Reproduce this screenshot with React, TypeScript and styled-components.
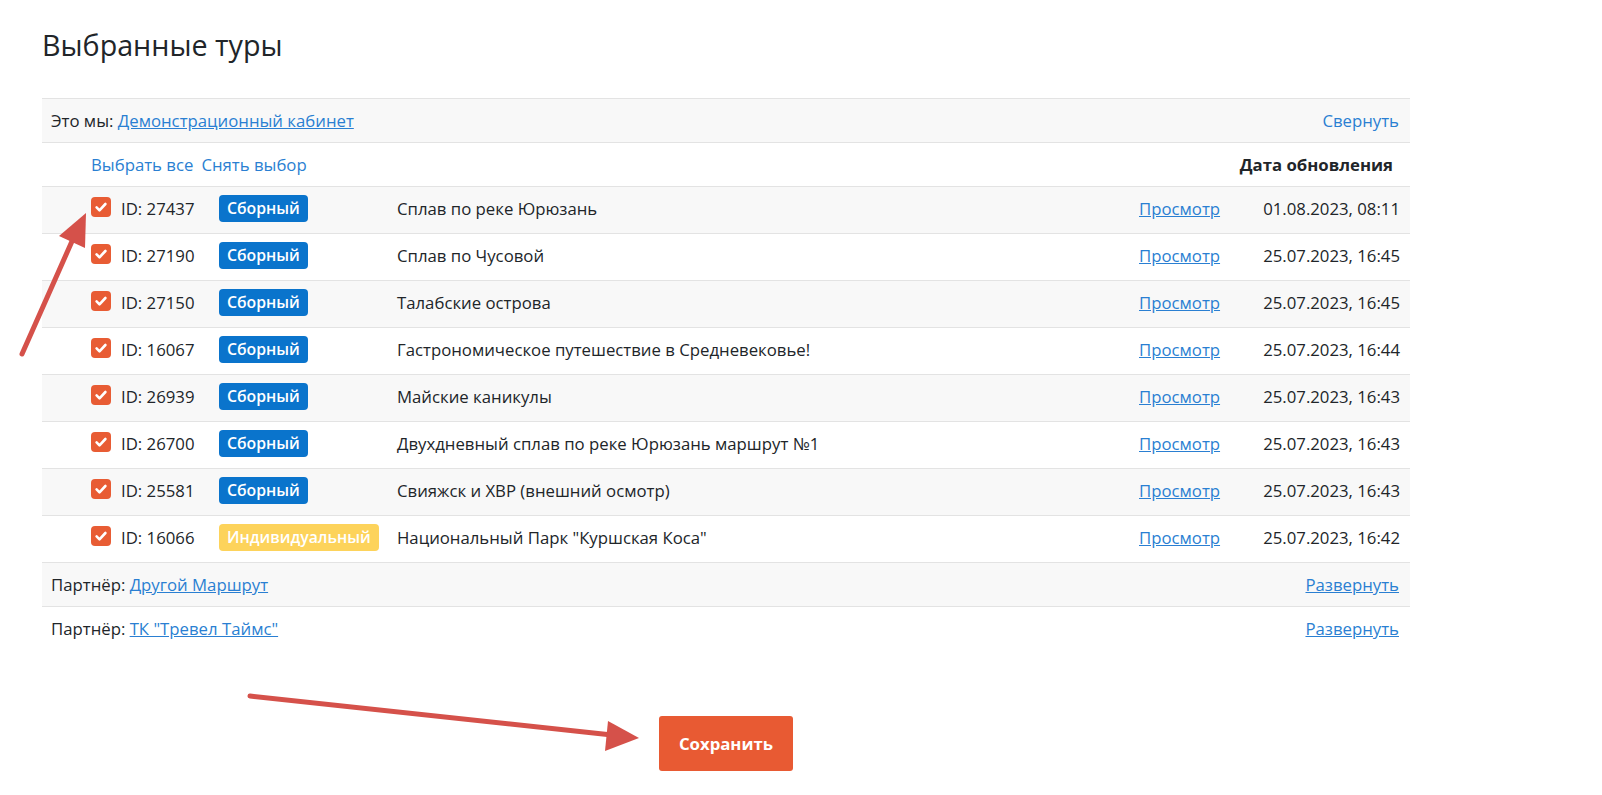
import React from "react";
import { styled, createGlobalStyle } from "styled-components";

type TourKind = "group" | "individual";

interface Tour {
    id: number;
    kind: TourKind;
    title: string;
    updated: string;
}

const tours: Tour[] = [
    { id: 27437, kind: "group", title: "Сплав по реке Юрюзань", updated: "01.08.2023, 08:11" },
    { id: 27190, kind: "group", title: "Сплав по Чусовой", updated: "25.07.2023, 16:45" },
    { id: 27150, kind: "group", title: "Талабские острова", updated: "25.07.2023, 16:45" },
    { id: 16067, kind: "group", title: "Гастрономическое путешествие в Средневековье!", updated: "25.07.2023, 16:44" },
    { id: 26939, kind: "group", title: "Майские каникулы", updated: "25.07.2023, 16:43" },
    { id: 26700, kind: "group", title: "Двухдневный сплав по реке Юрюзань маршрут №1", updated: "25.07.2023, 16:43" },
    { id: 25581, kind: "group", title: "Свияжск и ХВР (внешний осмотр)", updated: "25.07.2023, 16:43" },
    { id: 16066, kind: "individual", title: "Национальный Парк \"Куршская Коса\"", updated: "25.07.2023, 16:42" },
];

const partners = ["Другой Маршрут", "ТК \"Тревел Таймс\""];

const GlobalStyle = createGlobalStyle`
    body {
        margin: 0;
        background: #fff;
        font-family: "Open Sans", "Noto Sans", sans-serif;
        color: #212529;
    }
`;

function CheckIcon() {
    return (
        <svg width="20" height="20" viewBox="0 0 20 20">
            <path d="M5.6 10.4l2.9 2.9 5.9-6.3" stroke="#fff" strokeWidth="2.6" fill="none"
                  strokeLinecap="round" strokeLinejoin="round"/>
        </svg>
    );
}

function Annotations() {
    return (
        <Overlay width="1602" height="795" viewBox="0 0 1602 795">
            <g stroke="#d5514a" strokeWidth="5" strokeLinecap="round" fill="none">
                <line x1="22" y1="354" x2="73" y2="239"/>
                <line x1="250" y1="696" x2="612" y2="735"/>
            </g>
            <g fill="#d5514a">
                <polygon points="86,213 59,236 85,248"/>
                <polygon points="639,738 608,721 605,751"/>
            </g>
        </Overlay>
    );
}

function App() {
    return (
        <>
            <GlobalStyle/>
            <Page>
                <Heading>Выбранные туры</Heading>
                <Table>
                    <GroupRow $striped>
                        <span>Это мы: <UnderLink href="#">Демонстрационный кабинет</UnderLink></span>
                        <PlainLink href="#">Свернуть</PlainLink>
                    </GroupRow>
                    <HeadRow>
                        <SelectLinks>
                            <PlainLink href="#">Выбрать все</PlainLink>
                            <PlainLink href="#">Снять выбор</PlainLink>
                        </SelectLinks>
                        <HeadLabel>Дата обновления</HeadLabel>
                    </HeadRow>
                    {tours.map((tour, i) => (
                        <TourRow key={tour.id} $striped={i % 2 === 0}>
                            <span/>
                            <Checkbox><CheckIcon/></Checkbox>
                            <span>ID: {tour.id}</span>
                            <span>
                                <Badge $kind={tour.kind}>
                                    {tour.kind === "group" ? "Сборный" : "Индивидуальный"}
                                </Badge>
                            </span>
                            <span>{tour.title}</span>
                            <UnderLink href="#">Просмотр</UnderLink>
                            <DateCell>{tour.updated}</DateCell>
                        </TourRow>
                    ))}
                    {partners.map((name, i) => (
                        <GroupRow key={name} $striped={i % 2 === 0}>
                            <span>Партнёр: <UnderLink href="#">{name}</UnderLink></span>
                            <UnderLink href="#">Развернуть</UnderLink>
                        </GroupRow>
                    ))}
                </Table>
                <Actions>
                    <SaveButton>Сохранить</SaveButton>
                </Actions>
            </Page>
            <Annotations/>
        </>
    );
}

const Page = styled.div`
    width: 1368px;
    padding: 28px 0 0 42px;
`;

const Heading = styled.h1`
    margin: 0 0 36px 0;
    font-size: 28.7px;
    font-weight: 400;
    line-height: 1.2;
    color: #212529;
`;

const Table = styled.div`
    font-size: 16.75px;
`;

const rowBase = `
    border-top: 1px solid #e3e3e3;
    box-sizing: border-box;
`;

const GroupRow = styled.div<{ $striped?: boolean }>`
    ${rowBase};
    height: 44px;
    display: flex;
    align-items: center;
    justify-content: space-between;
    padding: 0 11px 0 9px;
    background: ${({ $striped }) => ($striped ? "#f8f8f8" : "#fff")};
`;

const HeadRow = styled.div`
    ${rowBase};
    height: 44px;
    display: flex;
    align-items: center;
    justify-content: space-between;
    padding: 0 17px 0 49px;
`;

const SelectLinks = styled.div`
    display: flex;
    gap: 8px;
`;

const HeadLabel = styled.span`
    font-weight: 700;
`;

const TourRow = styled.div<{ $striped?: boolean }>`
    ${rowBase};
    height: 47px;
    display: grid;
    grid-template-columns: 49px 30px 98px 178px 1fr 80px 181px;
    align-items: center;
    padding: 0 10px 4px 0;
    background: ${({ $striped }) => ($striped ? "#f8f8f8" : "#fff")};
`;

const DateCell = styled.span`
    text-align: right;
    white-space: nowrap;
`;

const Checkbox = styled.span`
    width: 20px;
    height: 20px;
    margin-bottom: 2px;
    border-radius: 4px;
    background: #e85c34;
    display: flex;
`;

const Badge = styled.span<{ $kind: TourKind }>`
    display: inline-block;
    height: 27px;
    line-height: 27px;
    padding: 0 8px;
    border-radius: 4px;
    font-weight: 600;
    font-size: 15.8px;
    color: #fff;
    background: ${({ $kind }) => ($kind === "group" ? "#0a74cc" : "#fdd35b")};
`;

const PlainLink = styled.a`
    color: #2a7fd2;
    text-decoration: none;
`;

const UnderLink = styled.a`
    color: #2a7fd2;
    text-decoration: underline;
`;

const Actions = styled.div`
    display: flex;
    justify-content: center;
    padding-top: 66px;
`;

const SaveButton = styled.button`
    height: 55px;
    padding: 0 20px;
    border: 0;
    border-radius: 3px;
    background: #e85a33;
    color: #fff;
    font-family: "Open Sans", sans-serif;
    font-weight: 700;
    font-size: 16.75px;
    cursor: pointer;
`;

const Overlay = styled.svg`
    position: absolute;
    left: 0;
    top: 0;
    pointer-events: none;
`;

export default App;
